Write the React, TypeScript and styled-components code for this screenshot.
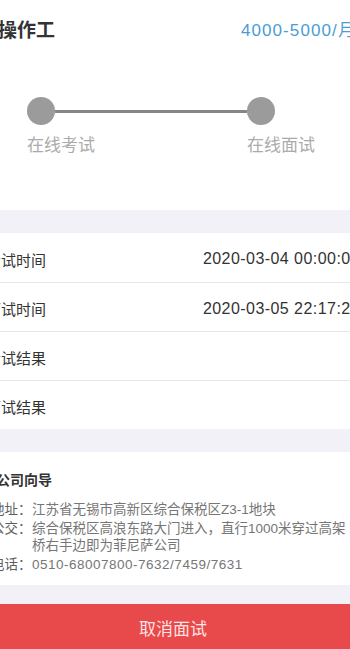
import React from "react";
import styled, { createGlobalStyle } from "styled-components";

const Global = createGlobalStyle`
  html, body { margin: 0; padding: 0; overflow: hidden; background: #ffffff; }
  body { font-family: "Liberation Sans", "Noto Sans CJK SC", sans-serif; }
  * { box-sizing: border-box; }
`;

const Page = styled.div`
  width: 374px;
  height: 649px;
  margin-left: -14px;
  display: flex;
  flex-direction: column;
  background: #f2f1f7;
  overflow: hidden;
`;

const Card = styled.section`
  background: #ffffff;
`;

const Gap = styled.div<{ $h: number }>`
  height: ${(p) => p.$h}px;
  flex: none;
`;

const Header = styled.div`
  display: flex;
  justify-content: space-between;
  align-items: center;
  padding: 19px 4px 0 12px;
  height: 43px;
`;

const Title = styled.h1`
  margin: 0;
  font-size: 19px;
  line-height: 24px;
  font-weight: 700;
  color: #333333;
`;

const Salary = styled.span`
  font-size: 17px;
  line-height: 24px;
  letter-spacing: 1.1px;
  color: #4a9dd3;
`;

const Stepper = styled.div`
  padding: 54px 0 54px 41px;
`;

const Track = styled.div`
  display: flex;
  align-items: center;
  width: 248px;
`;

const Dot = styled.span`
  width: 28px;
  height: 28px;
  border-radius: 50%;
  background: #9b9b9b;
  flex: none;
`;

const Line = styled.span`
  flex: 1;
  height: 3px;
  background: #868686;
`;

const StepLabels = styled.div`
  display: grid;
  grid-template-columns: 220px auto;
  margin-top: 11px;
`;

const StepLabel = styled.span`
  font-size: 17px;
  line-height: 20px;
  color: #ababab;
  white-space: nowrap;
`;

const Row = styled.div`
  display: flex;
  justify-content: space-between;
  align-items: center;
  height: 49px;
  padding: 3px 0 0 0;
  & + & { border-top: 1px solid #e6e6e8; }
`;

const RowLabel = styled.span`
  font-size: 15px;
  color: #333333;
  white-space: nowrap;
`;

const RowValue = styled.span`
  font-size: 16px;
  letter-spacing: 0.45px;
  color: #333333;
  white-space: nowrap;
`;

const Guide = styled(Card)`
  padding: 18px 10px 12px 5px;
  display: flex;
  flex-direction: column;
`;

const GuideTitle = styled.h2`
  margin: 0 0 10.5px 5px;
  font-size: 14px;
  line-height: 20px;
  font-weight: 700;
  color: #333333;
`;

const InfoList = styled.div`
  display: flex;
  flex-direction: column;
  gap: 2px;
`;

const Info = styled.div`
  display: flex;
  font-size: 13.5px;
  line-height: 17px;
`;

const InfoLabel = styled.span`
  flex: 0 0 41px;
  white-space: nowrap;
  color: #5e5e5e;
`;

const InfoValue = styled.span<{ $num?: boolean }>`
  flex: 1;
  color: #767676;
  letter-spacing: ${(p) => (p.$num ? "0.5px" : "0")};
`;

const CancelButton = styled.button`
  flex: none;
  height: 48px;
  border: none;
  background: #e8494b;
  color: #fde3e3;
  font-family: inherit;
  font-size: 17px;
  padding: 0;
`;

const rows = [
  { label: "考试时间", value: "2020-03-04 00:00:00" },
  { label: "面试时间", value: "2020-03-05 22:17:25" },
  { label: "考试结果", value: "" },
  { label: "面试结果", value: "" },
];

export default function App() {
  return (
    <>
      <Global />
      <Page>
        <Card>
          <Header>
            <Title>操作工</Title>
            <Salary>4000-5000/月</Salary>
          </Header>
          <Stepper>
            <Track>
              <Dot />
              <Line />
              <Dot />
            </Track>
            <StepLabels>
              <StepLabel>在线考试</StepLabel>
              <StepLabel>在线面试</StepLabel>
            </StepLabels>
          </Stepper>
        </Card>
        <Gap $h={23} />
        <Card>
          {rows.map((r) => (
            <Row key={r.label}>
              <RowLabel>{r.label}</RowLabel>
              <RowValue>{r.value}</RowValue>
            </Row>
          ))}
        </Card>
        <Gap $h={23} />
        <Guide>
          <GuideTitle>公司向导</GuideTitle>
          <InfoList>
            <Info>
              <InfoLabel>地址：</InfoLabel>
              <InfoValue>江苏省无锡市高新区综合保税区Z3-1地块</InfoValue>
            </Info>
            <Info>
              <InfoLabel>公交：</InfoLabel>
              <InfoValue>
                综合保税区高浪东路大门进入，直行1000米穿过高架桥右手边即为菲尼萨公司
              </InfoValue>
            </Info>
            <Info>
              <InfoLabel>电话：</InfoLabel>
              <InfoValue $num>0510-68007800-7632/7459/7631</InfoValue>
            </Info>
          </InfoList>
        </Guide>
        <Gap $h={19} />
        <CancelButton>取消面试</CancelButton>
      </Page>
    </>
  );
}
